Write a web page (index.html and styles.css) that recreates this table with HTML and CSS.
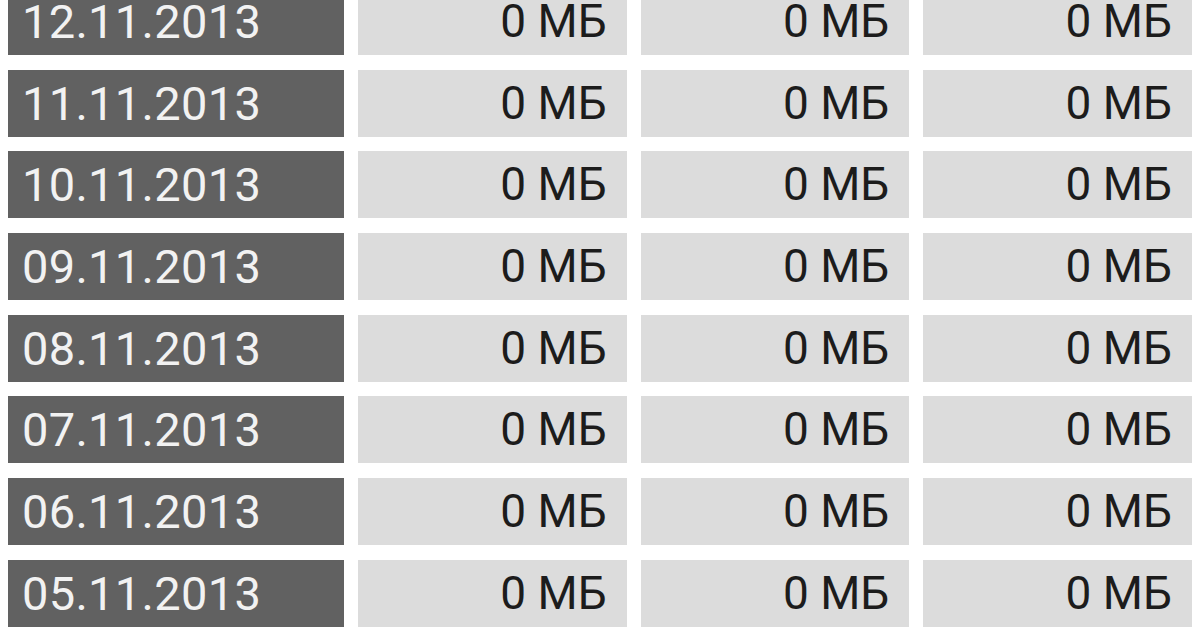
FILE: index.html
```html
<!DOCTYPE html>
<html lang="ru">
<head>
<meta charset="utf-8">
<link rel="stylesheet" href="styles.css">
</head>
<body>
<div class="table">
  <div class="row"><div class="date">12.11.2013</div><div class="val">0 МБ</div><div class="val">0 МБ</div><div class="val">0 МБ</div></div>
  <div class="row"><div class="date">11.11.2013</div><div class="val">0 МБ</div><div class="val">0 МБ</div><div class="val">0 МБ</div></div>
  <div class="row"><div class="date">10.11.2013</div><div class="val">0 МБ</div><div class="val">0 МБ</div><div class="val">0 МБ</div></div>
  <div class="row"><div class="date">09.11.2013</div><div class="val">0 МБ</div><div class="val">0 МБ</div><div class="val">0 МБ</div></div>
  <div class="row"><div class="date">08.11.2013</div><div class="val">0 МБ</div><div class="val">0 МБ</div><div class="val">0 МБ</div></div>
  <div class="row"><div class="date">07.11.2013</div><div class="val">0 МБ</div><div class="val">0 МБ</div><div class="val">0 МБ</div></div>
  <div class="row"><div class="date">06.11.2013</div><div class="val">0 МБ</div><div class="val">0 МБ</div><div class="val">0 МБ</div></div>
  <div class="row"><div class="date">05.11.2013</div><div class="val">0 МБ</div><div class="val">0 МБ</div><div class="val">0 МБ</div></div>
</div>
</body>
</html>
```

FILE: styles.css
```css
html, body {
  margin: 0;
  padding: 0;
  background: #ffffff;
  overflow: hidden;
  width: 1200px;
  height: 630px;
}
.table {
  display: flex;
  flex-direction: column;
  gap: 14.7px;
  margin-top: -12px;
  padding: 0 8px;
  font-family: Roboto, "Noto Sans", sans-serif;
}
.row {
  display: grid;
  grid-template-columns: 336px 1fr 1fr 1fr;
  column-gap: 14px;
  height: 67px;
}
.date {
  background: #616161;
  color: #f2f2f2;
  font-size: 47px;
  line-height: 67px;
  padding-left: 14px;
  letter-spacing: 0.3px;
}
.val {
  background: #dcdcdc;
  color: #1c1c1c;
  font-size: 46px;
  line-height: 67px;
  text-align: right;
  padding-right: 20px;
}
```
